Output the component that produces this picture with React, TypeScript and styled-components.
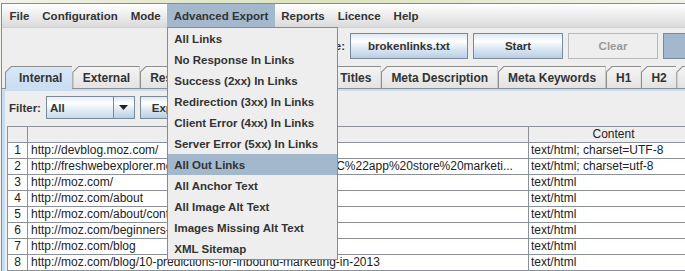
import React from 'react';
import styled, { createGlobalStyle } from 'styled-components';

const GlobalStyle = createGlobalStyle`
  html, body {
    margin: 0;
    padding: 0;
  }
  body {
    width: 685px;
    height: 271px;
    overflow: hidden;
    background: #eeeeee;
    font-family: "Liberation Sans", Arial, sans-serif;
  }
`;

const Desktop = styled.div`
  width: 685px;
  height: 271px;
  overflow: hidden;
  box-sizing: border-box;
  padding: 3px 0 0 1px;
  background: linear-gradient(90deg, #f4f4ee 0%, #e4e8cc 25%, #dde3bf 50%, #ebeedb 80%, #f2f2ea 100%);
`;

const Window = styled.div`
  height: 100%;
  box-sizing: border-box;
  border-top: 1px solid #8a8a8a;
  border-left: 1px solid #8a8a8a;
  background: #eeeeee;
`;

const MenuBar = styled.div`
  display: flex;
  height: 23px;
  padding-left: 1px;
  border-bottom: 1px solid #d2d2d2;
  background: linear-gradient(#ffffff, #dadada);
`;

const MenuTitle = styled.div<{ $open?: boolean }>`
  position: relative;
  display: flex;
  align-items: center;
  padding: 0 6.5px;
  font-size: 11.5px;
  font-weight: bold;
  color: #333333;
  white-space: nowrap;
  background: ${(p) => (p.$open ? '#a3b8cc' : 'transparent')};
`;

const Dropdown = styled.div`
  position: absolute;
  top: 100%;
  left: 0;
  z-index: 10;
  width: 171px;
  box-sizing: border-box;
  border: 1px solid #8a8a8a;
  background: #eeeeee;
`;

const DropItem = styled.div<{ $active?: boolean }>`
  display: flex;
  align-items: center;
  height: 21px;
  padding-left: 6px;
  font-size: 11.5px;
  font-weight: bold;
  color: #333333;
  background: ${(p) => (p.$active ? '#a3b8cc' : 'transparent')};
`;

const Toolbar = styled.div`
  display: flex;
  align-items: center;
  gap: 5px;
  height: 36px;
  padding-left: 298px;
`;

const ToolLabel = styled.span`
  flex: none;
  width: 45px;
  text-align: right;
  font-size: 11.5px;
  font-weight: bold;
  color: #333333;
`;

const Button = styled.div<{ $w: number; $h?: number; $state?: 'disabled' | 'pressed' }>`
  flex: none;
  display: flex;
  align-items: center;
  justify-content: center;
  width: ${(p) => p.$w}px;
  height: ${(p) => p.$h ?? 26}px;
  box-sizing: border-box;
  font-size: 11.5px;
  font-weight: bold;
  white-space: nowrap;
  border: 1px solid ${(p) => (p.$state === 'disabled' ? '#b8b8b8' : '#7a8a99')};
  color: ${(p) => (p.$state === 'disabled' ? '#999999' : '#333333')};
  background: ${(p) =>
    p.$state === 'disabled'
      ? '#eeeeee'
      : p.$state === 'pressed'
        ? '#a3b8cc'
        : 'linear-gradient(#dde8f3 0%, #ffffff 30%, #dde8f3 60%, #b8cfe5 100%)'};
`;

const TabStrip = styled.div`
  display: flex;
  align-items: flex-end;
  height: 24px;
  padding-left: 3px;
`;

const TabEdge = styled.div<{ $selected?: boolean }>`
  position: relative;
  z-index: ${(p) => (p.$selected ? 2 : 1)};
  flex: none;
  height: ${(p) => (p.$selected ? 23 : 22)}px;
  margin-bottom: ${(p) => (p.$selected ? -1 : 0)}px;
  padding: 1px 0 0 1px;
  box-sizing: border-box;
  background: #8e8e8e;
  clip-path: polygon(0 6px, 6px 0, 100% 0, 100% 100%, 0 100%);
`;

const TabFace = styled.div<{ $selected?: boolean }>`
  display: flex;
  align-items: center;
  height: 100%;
  padding: ${(p) => (p.$selected ? '0 10px 1px 13px' : '0 9.5px 1px')};
  font-size: 12px;
  font-weight: bold;
  color: #333333;
  white-space: nowrap;
  clip-path: polygon(0 5.5px, 5.5px 0, 100% 0, 100% 100%, 0 100%);
  background: ${(p) =>
    p.$selected ? 'linear-gradient(#d9e7f5, #c8ddf2)' : 'linear-gradient(#f4f4f4, #e2e2e2)'};
`;

const Panel = styled.div`
  height: 100%;
  border-top: 1px solid #8e8e8e;
  box-shadow: inset 3px 2px 0 #c8ddf2;
`;

const FilterRow = styled.div`
  display: flex;
  align-items: center;
  gap: 5px;
  padding: 7px 0 7px 7px;
`;

const FilterLabel = styled.span`
  flex: none;
  font-size: 11.5px;
  font-weight: bold;
  color: #333333;
`;

const Combo = styled.div`
  flex: none;
  display: flex;
  width: 89px;
  height: 23px;
  box-sizing: border-box;
  border: 1px solid #7a8a99;
  background: linear-gradient(#e4edf6 0%, #ffffff 30%, #e4edf6 60%, #c8d9ea 100%);
`;

const ComboValue = styled.div`
  flex: 1;
  display: flex;
  align-items: center;
  padding-left: 3px;
  font-size: 11.5px;
  font-weight: bold;
  color: #333333;
`;

const ComboArrow = styled.div`
  display: flex;
  align-items: center;
  justify-content: center;
  width: 20px;
  border-left: 1px solid #7a8a99;
  background: linear-gradient(#dde8f3 0%, #ffffff 30%, #dde8f3 60%, #b8cfe5 100%);
`;

const Grid = styled.div`
  margin-left: 5px;
  border-top: 1px solid #8c9198;
  border-left: 1px solid #8c9198;
`;

const Row = styled.div<{ $head?: boolean }>`
  display: grid;
  grid-template-columns: 19px 501px 170px;
  height: 16px;
  box-sizing: border-box;
  border-bottom: 1px solid #8c9198;
  background: ${(p) => (p.$head ? '#eeeeee' : '#ffffff')};
  font-size: 12px;
  color: #222222;
`;

const Cell = styled.div<{ $align?: 'left' | 'center'; $pad?: number; $line?: boolean }>`
  box-sizing: border-box;
  padding-left: ${(p) => p.$pad ?? 0}px;
  border-left: ${(p) => (p.$line ? '1px solid #8c9198' : 'none')};
  text-align: ${(p) => p.$align ?? 'left'};
  line-height: 15px;
  white-space: nowrap;
  overflow: hidden;
`;

const menus = ['File', 'Configuration', 'Mode', 'Advanced Export', 'Reports', 'Licence', 'Help'];

const exportItems = [
  'All Links',
  'No Response In Links',
  'Success (2xx) In Links',
  'Redirection (3xx) In Links',
  'Client Error (4xx) In Links',
  'Server Error (5xx) In Links',
  'All Out Links',
  'All Anchor Text',
  'All Image Alt Text',
  'Images Missing Alt Text',
  'XML Sitemap',
];

// last tab runs off the right edge, only its slant shows
const tabs = [
  'Internal',
  'External',
  'Response Codes',
  'URI',
  'Page Titles',
  'Meta Description',
  'Meta Keywords',
  'H1',
  'H2',
  '',
];

const rows = [
  ['http://devblog.moz.com/', 'text/html; charset=UTF-8'],
  ['http://freshwebexplorer.moz.com/feed?q=%22aso%22%2C%22app%20store%20marketi...', 'text/html; charset=utf-8'],
  ['http://moz.com/', 'text/html'],
  ['http://moz.com/about', 'text/html'],
  ['http://moz.com/about/contact', 'text/html'],
  ['http://moz.com/beginners-guide-to-seo', 'text/html'],
  ['http://moz.com/blog', 'text/html'],
  ['http://moz.com/blog/10-predictions-for-inbound-marketing-in-2013', 'text/html'],
];

const App = (): React.ReactElement => {
  return (
    <>
      <GlobalStyle />
      <Desktop>
        <Window>
          <MenuBar>
            {menus.map((m) => (
              <MenuTitle key={m} $open={m === 'Advanced Export'}>
                {m}
                {m === 'Advanced Export' && (
                  <Dropdown>
                    {exportItems.map((item) => (
                      <DropItem key={item} $active={item === 'All Out Links'}>
                        {item}
                      </DropItem>
                    ))}
                  </Dropdown>
                )}
              </MenuTitle>
            ))}
          </MenuBar>

          <Toolbar>
            <ToolLabel>File:</ToolLabel>
            <Button $w={118}>brokenlinks.txt</Button>
            <Button $w={90}>Start</Button>
            <Button $w={90} $state="disabled">Clear</Button>
            <Button $w={90} $state="pressed" />
          </Toolbar>

          <TabStrip>
            {tabs.map((t, i) => (
              <TabEdge key={i} $selected={i === 0}>
                <TabFace $selected={i === 0}>{t}</TabFace>
              </TabEdge>
            ))}
          </TabStrip>

          <Panel>
            <FilterRow>
              <FilterLabel>Filter:</FilterLabel>
              <Combo>
                <ComboValue>All</ComboValue>
                <ComboArrow>
                  <svg width="9" height="5" viewBox="0 0 9 5">
                    <polygon points="0,0 9,0 4.5,5" fill="#222" />
                  </svg>
                </ComboArrow>
              </Combo>
              <Button $w={60} $h={23}>Export</Button>
            </FilterRow>

            <Grid>
              <Row $head>
                <Cell />
                <Cell $line $align="center">Address</Cell>
                <Cell $line $align="center">Content</Cell>
              </Row>
              {rows.map(([url, type], i) => (
                <Row key={url}>
                  <Cell $align="center">{i + 1}</Cell>
                  <Cell $line $pad={3}>{url}</Cell>
                  <Cell $line $pad={2}>{type}</Cell>
                </Row>
              ))}
            </Grid>
          </Panel>
        </Window>
      </Desktop>
    </>
  );
};

export default App;
